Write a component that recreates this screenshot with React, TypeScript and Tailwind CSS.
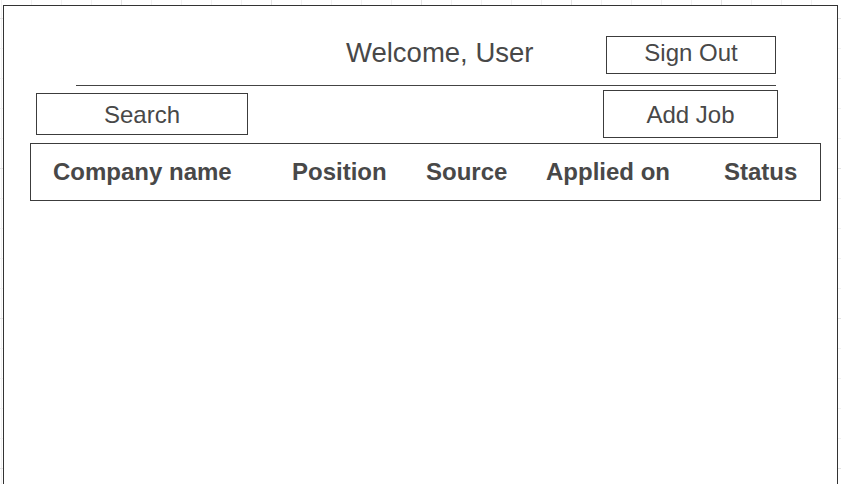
export default function App() {
  const columns = ["Company name", "Position", "Source", "Applied on", "Status"]

  return (
    <div className="relative w-[841px] h-[484px] overflow-hidden bg-white bg-[linear-gradient(to_right,#e3e3e3_1px,transparent_1px),linear-gradient(to_bottom,#e3e3e3_1px,transparent_1px),linear-gradient(to_right,#f1f1f1_1px,transparent_1px),linear-gradient(to_bottom,#f1f1f1_1px,transparent_1px)] bg-[size:150px_150px,150px_150px,30px_30px,30px_30px] bg-[position:121px_18px,121px_18px,1px_18px,1px_18px] font-['Liberation_Sans',Arial,sans-serif] text-[#484848]">
      {/* Wireframe frame */}
      <div className="ml-[3px] mt-[5px] w-[835px] h-[500px] border border-[#333] bg-white">
        {/* Top row */}
        <div className="mt-[30px] ml-[72px] w-[700px] h-[38px] flex items-center">
          <span className="pl-[270px] -mt-[4px] text-[27.5px] leading-none">Welcome, User</span>
          <div className="ml-auto w-[170px] h-[38px] border border-[#3c3c3c] flex items-center justify-center text-[24px] leading-none pb-[4px]">
            Sign Out
          </div>
        </div>

        <div className="mt-[11px] ml-[72px] w-[700px] h-px bg-[#444]"></div>

        {/* Search + add */}
        <div className="mt-[4px] flex items-start">
          <div className="ml-[32px] mt-[3px] w-[212px] h-[42px] border border-[#3c3c3c] flex items-center justify-center text-[24px] leading-none pt-[2px]">
            Search
          </div>
          <div className="ml-auto mr-[59px] w-[175px] h-[48px] border border-[#3c3c3c] flex items-center justify-center text-[24px] leading-none pt-[2px]">
            Add Job
          </div>
        </div>

        {/* Table header */}
        <div className="mt-[5px] ml-[26px] w-[791px] h-[58px] border border-[#3c3c3c] grid grid-cols-[239px_134px_120px_178px_auto] items-center pl-[22px] text-[24px] font-bold leading-none">
          {columns.map((col) => (
            <span key={col}>{col}</span>
          ))}
        </div>
      </div>
    </div>
  )
}
